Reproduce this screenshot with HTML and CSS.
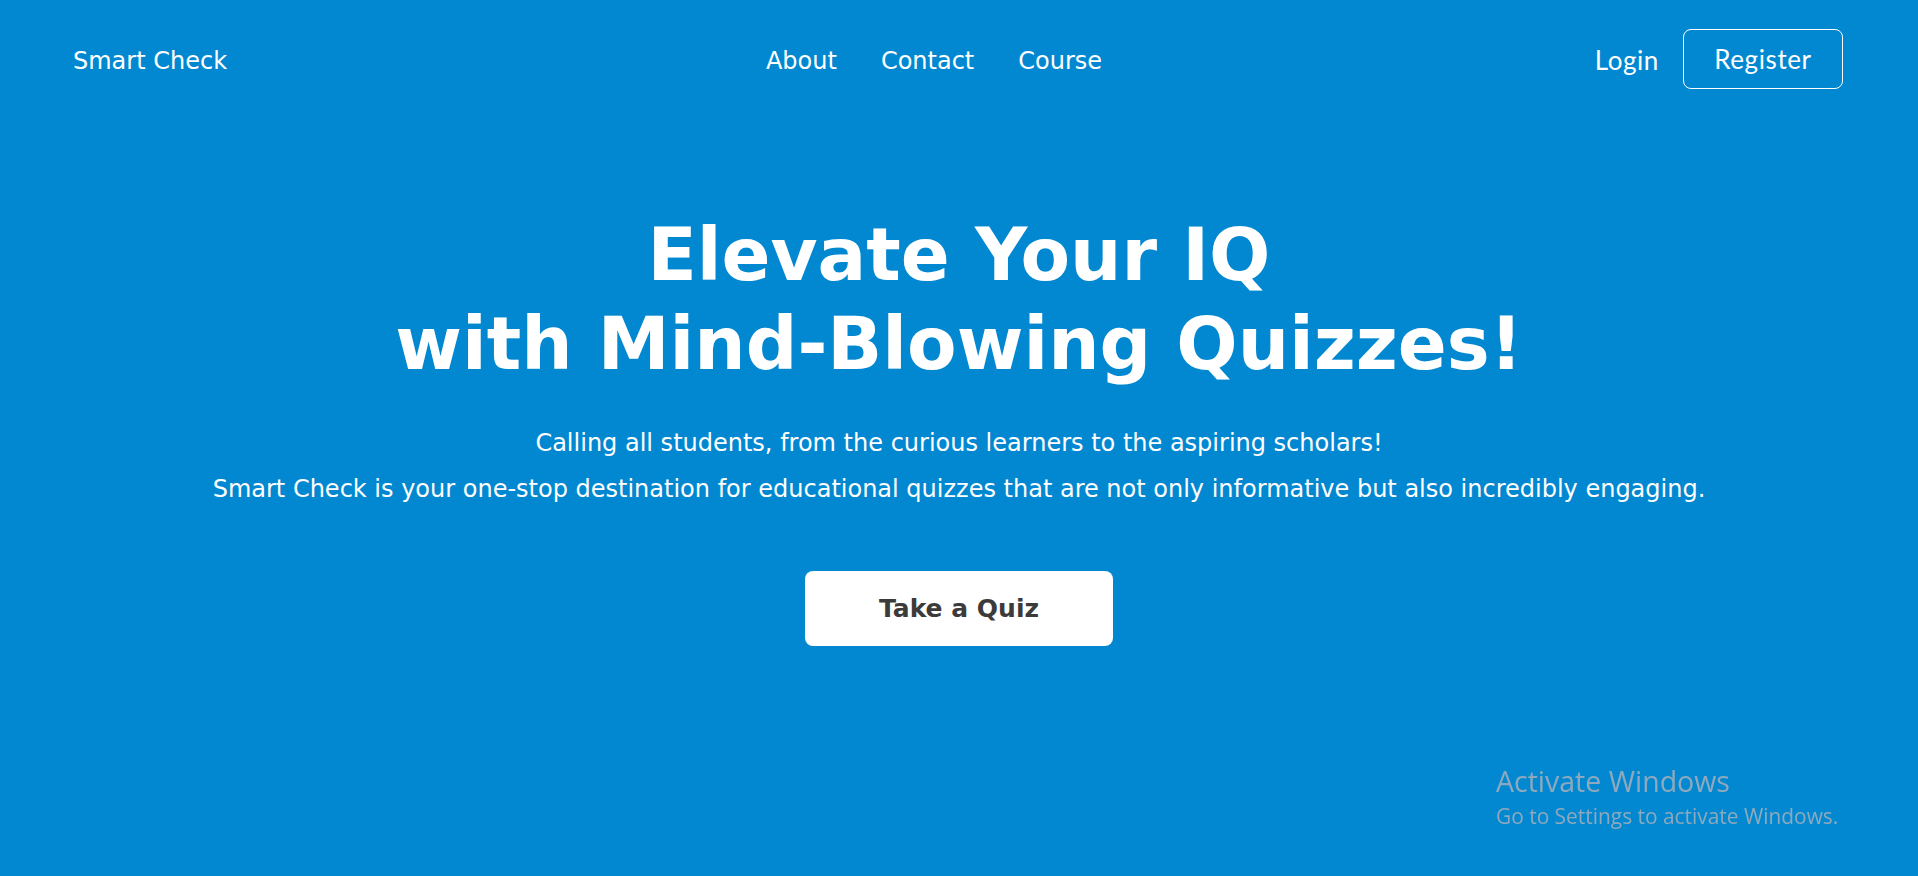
FILE: index.html
```html
<!DOCTYPE html>
<html lang="en">
<head>
<meta charset="utf-8">
<title>Smart Check</title>
<link rel="stylesheet" href="styles.css">
</head>
<body>
<div class="page">
  <header class="nav">
    <a class="logo" href="#">Smart Check</a>
    <nav class="links">
      <a href="#">About</a>
      <a href="#">Contact</a>
      <a href="#">Course</a>
    </nav>
    <div class="auth">
      <a class="login" href="#">Login</a>
      <a class="register" href="#">Register</a>
    </div>
  </header>
  <main class="hero">
    <h1>Elevate Your IQ<br>with Mind-Blowing Quizzes!</h1>
    <p class="lead">Calling all students, from the curious learners to the aspiring scholars!<br>Smart Check is your one-stop destination for educational quizzes that are not only informative but also incredibly engaging.</p>
    <a class="cta" href="#">Take a Quiz</a>
  </main>
</div>
<div class="watermark">
  <div class="wm-title">Activate Windows</div>
  <div class="wm-sub">Go to Settings to activate Windows.</div>
</div>
</body>
</html>
```
FILE: styles.css
```css
* { box-sizing: border-box; }
html, body { margin: 0; padding: 0; }
body {
  background: #0288d1;
  color: #fff;
  font-family: "DejaVu Sans", sans-serif;
  height: 876px;
  overflow: hidden;
}
a { color: #fff; text-decoration: none; }
.nav {
  display: flex;
  align-items: center;
  justify-content: space-between;
  padding: 29px 75px 0 73px;
  height: 89px;
}
.logo { font-size: 24px; width: 376px; padding-top: 3px; }
.links { display: flex; gap: 44px; font-size: 24px; padding-top: 3px; }
.auth { display: flex; align-items: center; gap: 24px; width: 424px; justify-content: flex-end; }
.login, .register { font-family: "Lato", sans-serif; font-size: 26px; letter-spacing: 0.6px; }
.login { padding-top: 2px; }
.register {
  border: 1px solid #fff;
  border-radius: 8px;
  width: 160px;
  height: 60px;
  display: flex;
  align-items: center;
  justify-content: center;
}
.hero {
  display: flex;
  flex-direction: column;
  align-items: center;
  text-align: center;
  padding-top: 122px;
}
h1 {
  margin: 0;
  font-size: 72.2px;
  line-height: 89px;
  font-weight: bold;
}
.lead {
  margin: 31px 0 0;
  font-size: 24px;
  line-height: 46px;
}
.cta {
  margin-top: 59px;
  width: 308px;
  height: 75px;
  background: #fff;
  color: #3d3a3a;
  border-radius: 8px;
  font-weight: bold;
  font-size: 25px;
  display: flex;
  align-items: center;
  justify-content: center;
}
.watermark {
  position: fixed;
  left: 1496px;
  top: 763px;
  color: #8ea9bd;
  font-family: "Open Sans", sans-serif;
}
.wm-title { font-size: 28.5px; line-height: 36px; }
.wm-sub { font-size: 20.9px; line-height: 28px; margin-top: 3px; }
```
